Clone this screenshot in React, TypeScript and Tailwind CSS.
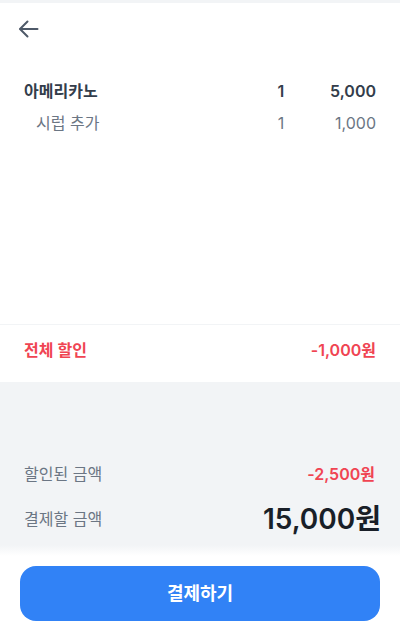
import React from "react";

export default function App() {
  const font = { fontFamily: 'Inter, "Noto Sans CJK KR", "Noto Sans", sans-serif' };
  return (
    <div className="w-[400px] h-[640px] bg-white flex flex-col overflow-hidden" style={font}>
      <div className="h-[3px] bg-[#f2f4f6]" />
      <div className="h-[52px] flex items-center pl-[18px]">
        <svg width="22" height="22" viewBox="0 0 22 22" fill="none" stroke="#4e5968" strokeWidth="2" strokeLinecap="round" strokeLinejoin="round">
          <path d="M19.5 11H2.5" />
          <path d="M9.5 3.5L2 11l7.5 7.5" />
        </svg>
      </div>
      <div className="pt-[20px] px-[24px]">
        <div className="h-8 flex items-center text-[16px] font-semibold text-[#333d4b]">
          <span className="flex-1">아메리카노</span>
          <span className="w-[20px] text-center pl-[2px]">1</span>
          <span className="w-[86px] text-right">5,000</span>
        </div>
        <div className="h-8 flex items-center text-[16px] text-[#6b7684]">
          <span className="flex-1 pl-[12px]">시럽 추가</span>
          <span className="w-[20px] text-center pl-[2px]">1</span>
          <span className="w-[86px] text-right">1,000</span>
        </div>
      </div>
      <div className="flex-1" />
      <div className="border-t border-[#f2f4f6] h-[58px] px-[24px] pt-[13px] flex justify-between text-[16px] leading-6 font-semibold text-[#f04452]">
        <span>전체 할인</span>
        <span>-1,000원</span>
      </div>
      <div className="h-[163px] bg-[#f2f4f6] px-[24px] pb-[8px] flex flex-col justify-end gap-[15px]">
        <div className="h-6 flex items-center justify-between text-[16px]">
          <span className="text-[#6b7684]">할인된 금액</span>
          <span className="text-[#f04452] font-semibold pr-[1px]">-2,500원</span>
        </div>
        <div className="h-9 flex items-center justify-between">
          <span className="text-[16px] text-[#6b7684]">결제할 금액</span>
          <span className="text-[28px] font-semibold text-[#191f28] -mr-[5px]">15,000원</span>
        </div>
      </div>
      <div className="h-[11px] bg-gradient-to-b from-[#f2f4f6] to-white" />
      <div className="px-[20px] pt-[10px] pb-[19px]">
        <button className="w-full h-[55px] rounded-[16px] bg-[#3182f6] text-white text-[18px] font-semibold">
          결제하기
        </button>
      </div>
    </div>
  );
}
